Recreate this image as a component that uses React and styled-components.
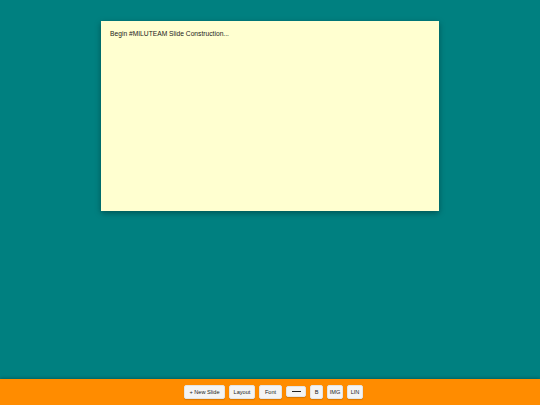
import React from "react";
import styled, { createGlobalStyle } from "styled-components";

const Global = createGlobalStyle`
  html, body { margin: 0; padding: 0; height: 100%; }
  body { background: #008080; font-family: "Liberation Sans", Arial, sans-serif; }
  #root { height: 100%; }
`;

const Page = styled.div`
  display: flex;
  flex-direction: column;
  height: 100vh;
`;

const Stage = styled.main`
  flex: 1;
  display: flex;
  justify-content: center;
  align-items: flex-start;
  padding-top: 21px;
`;

const Slide = styled.section`
  width: 338px;
  height: 190px;
  box-sizing: border-box;
  background: #ffffd0;
  padding: 9px 9px;
  box-shadow: 0 2px 6px rgba(0, 0, 0, 0.35);
  font-size: 6.7px;
  line-height: 8px;
  color: #1a1a1a;
`;

const Toolbar = styled.footer`
  height: 26px;
  background: #ff8c00;
  display: flex;
  justify-content: center;
  align-items: center;
  gap: 4px;
  box-shadow: 0 -1px 3px rgba(0, 0, 0, 0.25);
  padding-left: 7px;
`;

const Button = styled.button`
  font-family: "Liberation Sans", Arial, sans-serif;
  font-size: 5.6px;
  width: ${(p) => p.$w}px;
  height: ${(p) => (p.$short ? "11px" : "13.5px")};
  align-self: center;
  margin-top: ${(p) => (p.$short ? "-2px" : "0")};
  padding: 0;
  background: #f4f4f4;
  color: #222;
  border: 1px solid #e4e4e4;
  border-radius: 2px;
  box-shadow: 0 1px 1px rgba(0, 0, 0, 0.15);
  display: inline-flex;
  align-items: center;
  justify-content: center;
  box-sizing: border-box;
  cursor: pointer;
`;

const Rule = styled.span`
  display: block;
  width: 9px;
  height: 1px;
  background: #222;
`;

export default function App() {
  return (
    <>
      <Global />
      <Page>
        <Stage>
          <Slide>Begin #MILUTEAM Slide Construction...</Slide>
        </Stage>
        <Toolbar>
          <Button $w={41}>+ New Slide</Button>
          <Button $w={26}>Layout</Button>
          <Button $w={23}>Font</Button>
          <Button $w={20} $short>
            <Rule />
          </Button>
          <Button $w={13}>B</Button>
          <Button $w={16}>IMG</Button>
          <Button $w={16}>LIN</Button>
        </Toolbar>
      </Page>
    </>
  );
}
